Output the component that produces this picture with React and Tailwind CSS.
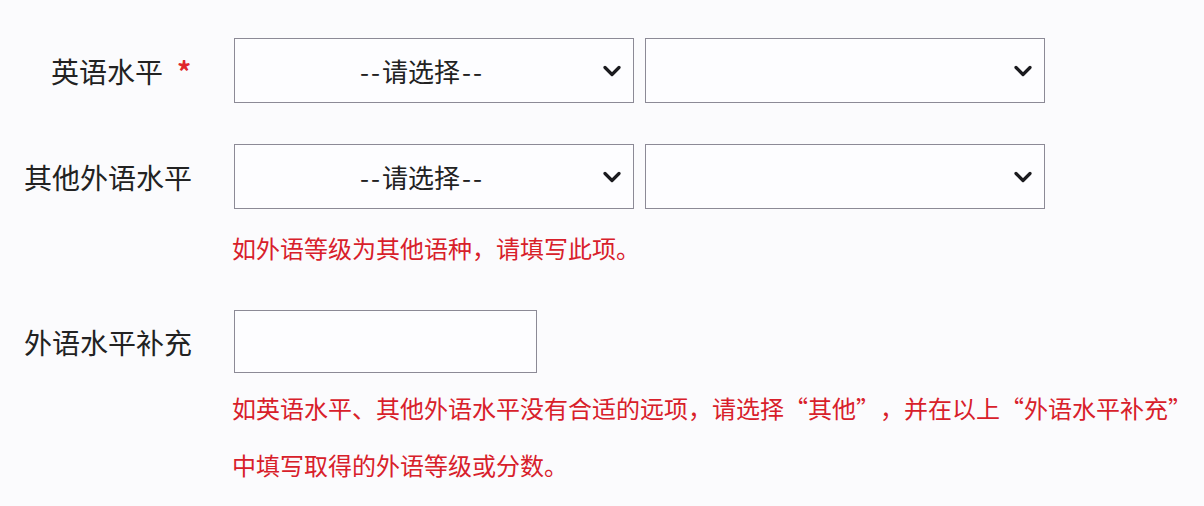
import React from "react";

const FONT = { fontFamily: '"Noto Sans CJK SC", "Noto Sans", sans-serif' };

function Chevron() {
  return (
    <svg width="18" height="12" viewBox="0 0 18 12" className="shrink-0">
      <polyline points="2,2.5 9,9.5 16,2.5" fill="none" stroke="#1b1b1f" strokeWidth="3.2" strokeLinecap="round" strokeLinejoin="round" />
    </svg>
  );
}

function FakeSelect({ placeholder }) {
  return (
    <div className="w-[400px] h-[65px] border border-[#8c8a96] bg-[#fdfdff] flex items-center pr-[12px]">
      <div className="flex-1 text-center text-[26px] text-[#222] pl-[6px]">
        {placeholder && (
          <>
            <span className="tracking-[2px]">--</span>请选择<span className="tracking-[2px] pl-[2px]">--</span>
          </>
        )}
      </div>
      <Chevron />
    </div>
  );
}

function Label({ children, star }) {
  return (
    <div className="w-[234px] shrink-0 flex items-center text-[28px] text-[#222]">
      <span className={star ? "pl-[51px]" : "pl-[24px]"}>{children}</span>
      {star && <span className="ml-[14px] text-[#e0262c] font-bold">*</span>}
    </div>
  );
}

// 全角引号
function Q({ open, children }) {
  return (
    <span className={`inline-block w-[24px] ${open ? "text-right" : "text-left"}`}>{children}</span>
  );
}

export default function App() {
  return (
    <div className="w-[1204px] h-[506px] bg-[#fbfbfd] overflow-hidden" style={FONT}>
      <div className="pt-[38px]">
        {/* 英语水平 */}
        <div className="flex items-center h-[65px]">
          <Label star>英语水平</Label>
          <div className="flex gap-[11px]">
            <FakeSelect placeholder />
            <FakeSelect />
          </div>
        </div>

        {/* 其他外语水平 */}
        <div className="flex items-center h-[65px] mt-[41px]">
          <Label>其他外语水平</Label>
          <div className="flex gap-[11px]">
            <FakeSelect placeholder />
            <FakeSelect />
          </div>
        </div>
        <div className="pl-[232px] mt-[24px] h-[30px] leading-[30px] text-[24px] text-[#d8202a]">
          如外语等级为其他语种，请填写此项。
        </div>

        {/* 外语水平补充 */}
        <div className="flex items-center h-[63px] mt-[47px]">
          <Label>外语水平补充</Label>
          <div className="w-[303px] h-[63px] border border-[#8c8a96] bg-[#fdfdff]" />
        </div>
        <div className="pl-[232px] mt-[6px] text-[24px] leading-[57px] text-[#d8202a] whitespace-nowrap">
          <div>
            如英语水平、其他外语水平没有合适的远项，请选择<Q open>“</Q>其他<Q>”</Q>，并在以上<Q open>“</Q>外语水平补充<Q>”</Q>
          </div>
          <div>中填写取得的外语等级或分数。</div>
        </div>
      </div>
    </div>
  );
}
